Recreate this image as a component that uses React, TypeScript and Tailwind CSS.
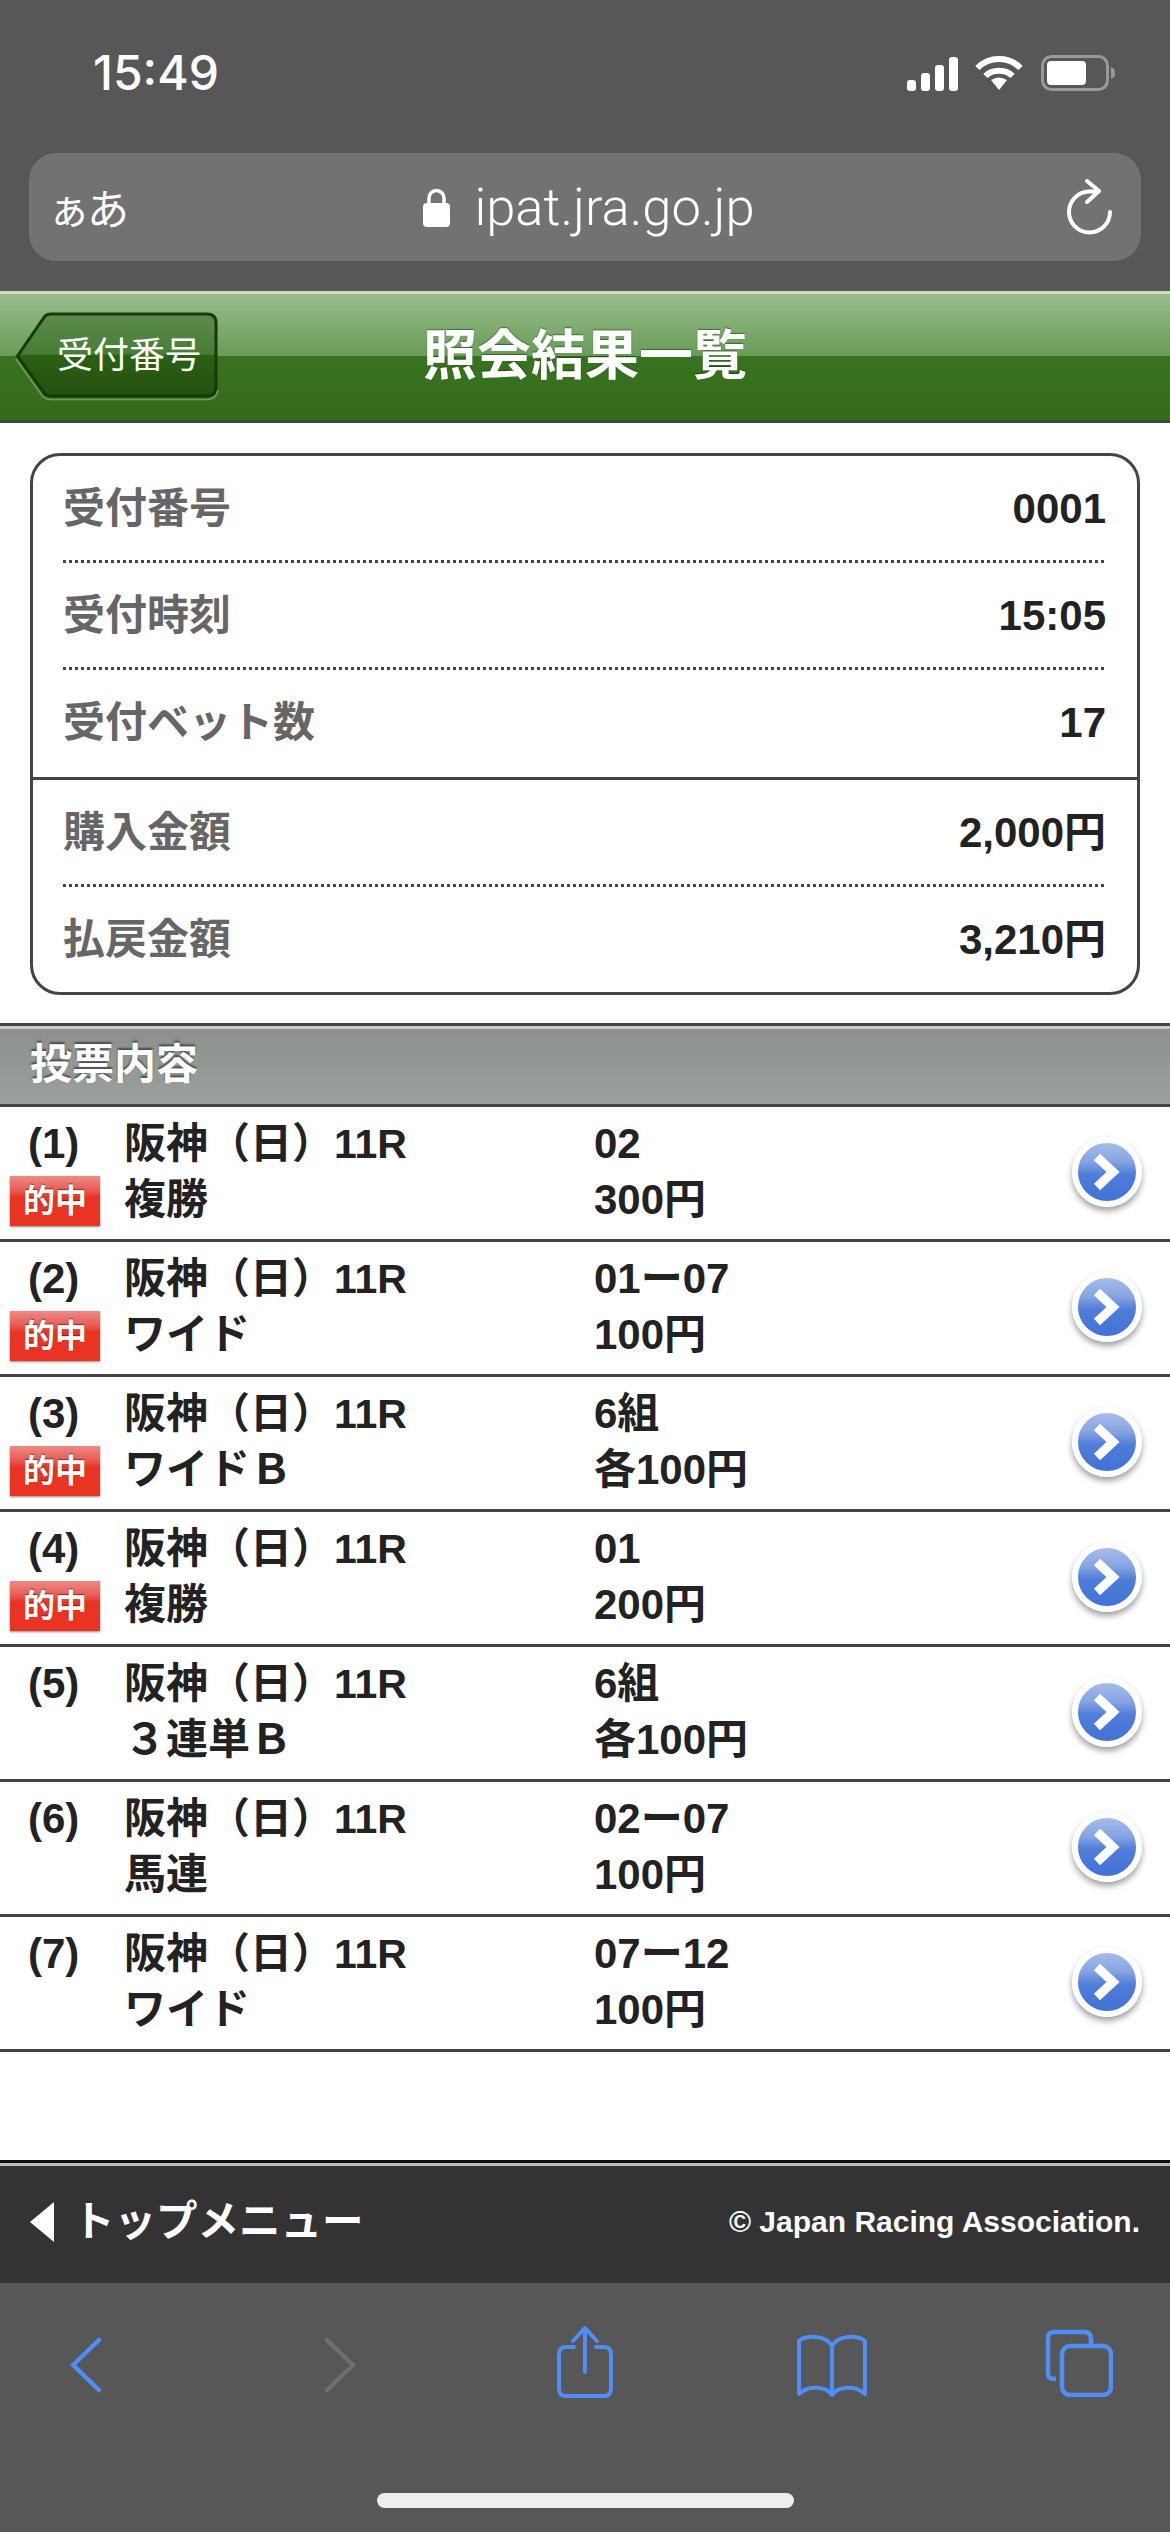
import React from "react";

const sans = "[font-family:'Liberation_Sans','Noto_Sans_CJK_JP',sans-serif]";

const rows = [
  { n: "(1)", hit: true, kind: "複勝", a: "02", b: "300円" },
  { n: "(2)", hit: true, kind: "ワイド", a: "01ー07", b: "100円" },
  { n: "(3)", hit: true, kind: "ワイドＢ", a: "6組", b: "各100円" },
  { n: "(4)", hit: true, kind: "複勝", a: "01", b: "200円" },
  { n: "(5)", hit: false, kind: "３連単Ｂ", a: "6組", b: "各100円" },
  { n: "(6)", hit: false, kind: "馬連", a: "02ー07", b: "100円" },
  { n: "(7)", hit: false, kind: "ワイド", a: "07ー12", b: "100円" },
];

function InfoRow({ label, value, dotted = true }: { label: string; value: string; dotted?: boolean }) {
  return (
    <>
      <div className="ml-[30px] mr-[31px] flex h-[104px] items-center justify-between">
        <span className="text-[42px] font-bold text-[#666666]">{label}</span>
        <span className="text-[42px] font-bold text-[#222222]">{value}</span>
      </div>
      {dotted && (
        <div className="ml-[30px] mr-[30px] h-[3px] bg-[repeating-linear-gradient(90deg,#444444_0,#444444_3px,transparent_3px,transparent_6px)]" />
      )}
    </>
  );
}

function Arrow() {
  return (
    <div className="mr-[28px] flex h-[70px] w-[70px] shrink-0 items-center justify-center rounded-full border-[6px] border-white bg-[linear-gradient(#a6bdea_0%,#86a4e2_32%,#4f7dd8_55%,#4272d5_100%)] shadow-[0_4px_6px_rgba(0,0,0,0.38)]">
      <svg width="32" height="40" viewBox="0 0 32 40">
        <path d="M6 5 L22 20 L6 35" fill="none" stroke="#ffffff" strokeWidth="9" />
      </svg>
    </div>
  );
}

function Row({ r }: { r: (typeof rows)[number] }) {
  return (
    <div className="flex h-[135px] items-center border-b-[3px] border-[#444444] pb-[3px] text-[42px] font-bold leading-[56px] text-[#222222]">
      <div className="w-[124px] shrink-0">
        <div className="pl-[28px]">{r.n}</div>
        <div className="h-[56px] pl-[10px] pt-[4px]">
          {r.hit && (
            <div className="flex h-[50px] w-[90px] items-center justify-center bg-[linear-gradient(#ee8a86_0%,#e85a52_30%,#e93323_42%,#e93323_100%)] text-[32px] leading-none text-white shadow-[0_1px_2px_rgba(0,0,0,0.45)] [text-shadow:0_-1px_1px_rgba(0,0,0,0.5)]">
              的中
            </div>
          )}
        </div>
      </div>
      <div className="w-[470px] shrink-0">
        <div className="whitespace-nowrap">
          阪神（日）<span className="text-[41px]">11R</span>
        </div>
        <div>{r.kind}</div>
      </div>
      <div className="flex-1">
        <div>{r.a}</div>
        <div>{r.b}</div>
      </div>
      <Arrow />
    </div>
  );
}

export default function App() {
  return (
    <div className={`flex h-[2532px] w-[1170px] flex-col overflow-hidden bg-white ${sans}`}>
      {/* browser top */}
      <div className="h-[291px] shrink-0 bg-[#575757] px-[29px]">
        <div className="flex h-[153px] items-start justify-between pl-[64px]">
          <span className="mt-[45px] font-['Inter',sans-serif] text-[48px] font-medium leading-[56px] text-white">15:49</span>
          <div className="mr-[26px] mt-[55px] flex items-start gap-[17px]">
            <svg width="51" height="34" viewBox="0 0 51 34" className="mt-[2px]" fill="#fff">
              <rect x="0" y="23" width="9" height="11" rx="3" />
              <rect x="14" y="16" width="9" height="18" rx="3" />
              <rect x="28" y="8" width="9" height="26" rx="3" />
              <rect x="42" y="0" width="9" height="34" rx="3" />
            </svg>
            <svg width="48" height="36" viewBox="0 0 48 36" fill="none" stroke="#fff" strokeWidth="6">
              <path d="M2.5 13 C14 1 34 1 45.5 13" />
              <path d="M10.5 21 C17 14 31 14 37.5 21" />
              <path d="M16 25 Q24 20 32 25 L24 35 Z" fill="#fff" stroke="none" />
            </svg>
            <svg width="74" height="36" viewBox="0 0 74 36" fill="none" className="ml-[1px]">
              <rect x="1.5" y="1.5" width="65" height="33" rx="9" stroke="#999999" strokeWidth="3" />
              <rect x="6" y="6" width="39" height="24" rx="4" fill="#fff" />
              <path d="M70 12 C73 13 74 15 74 18 C74 21 73 23 70 24 Z" fill="#999999" />
            </svg>
          </div>
        </div>
        <div className="flex h-[108px] items-center justify-between rounded-[27px] bg-[#727272] pl-[19px] pr-[28px] text-white">
          <span className="w-[63px] whitespace-nowrap font-['Noto_Sans_CJK_JP',sans-serif] text-[42px] leading-none tracking-[-3px]">ぁあ</span>
          <div className="flex items-center gap-[24px]">
            <svg width="27" height="39" viewBox="0 0 27 39" fill="#fff">
              <path d="M6 17 V10 a7.5 7.5 0 0 1 15 0 V17" fill="none" stroke="#fff" strokeWidth="3.5" />
              <rect x="0" y="15" width="27" height="24" rx="4" />
            </svg>
            <span className="font-['Roboto',sans-serif] text-[52.5px] font-light leading-none">ipat.jra.go.jp</span>
          </div>
          <svg width="46" height="56" viewBox="0 0 46 56" fill="none" stroke="#fff" strokeWidth="4" strokeLinecap="round" strokeLinejoin="round">
            <path d="M43 33 A20.5 20.5 0 1 1 22 12.5 L31 12.5" />
            <path d="M20 2 L32 12 L20 23" />
          </svg>
        </div>
      </div>

      {/* green header */}
      <div className="relative flex h-[132px] shrink-0 items-center justify-center border-t-[3px] border-b-[3px] border-t-[#c9dfc2] border-b-[#444444] bg-[linear-gradient(#9abd8c_0%,#679c57_49%,#38731f_49%,#346b1c_100%)]">
        <div className="absolute left-[15px] top-[18px] flex h-[90px] w-[204px] items-center justify-end pb-[3px] pr-[18px] text-[36px] leading-none text-white">
          <svg width="204" height="90" viewBox="0 0 204 90" className="absolute left-0 top-0">
            <defs>
              <linearGradient id="bk" x1="0" x2="0" y1="0" y2="1">
                <stop offset="0" stopColor="#5c8c4c" />
                <stop offset="0.49" stopColor="#477c36" />
                <stop offset="0.5" stopColor="#2b6114" />
                <stop offset="1" stopColor="#24500f" />
              </linearGradient>
            </defs>
            <path d="M2.5 44 L30 4 Q32 2 36 2 H192 Q201 2 201 11 V75 Q201 84 192 84 H36 Q32 84 30 82 Z" fill="url(#bk)" stroke="#163a08" strokeWidth="3" />
            <path d="M1 47 L28 85 Q31 87.5 36 87.5 H192 Q201 87.5 203 78" fill="none" stroke="#6f9d5f" strokeWidth="1.5" />
          </svg>
          <span className="relative">受付番号</span>
        </div>
        <span className="pb-[2px] text-[54px] font-bold leading-none text-white [text-shadow:0_-1px_1px_rgba(0,0,0,0.4)]">照会結果一覧</span>
      </div>

      {/* info card */}
      <div className="shrink-0 px-[30px] pt-[30px]">
        <div className="h-[542px] rounded-[30px] border-[3px] border-[#444444]">
          <InfoRow label="受付番号" value="0001" />
          <InfoRow label="受付時刻" value="15:05" />
          <InfoRow label="受付ベット数" value="17" dotted={false} />
          <div className="mt-[3px] h-[3px] bg-[#444444]" />
          <InfoRow label="購入金額" value="2,000円" />
          <InfoRow label="払戻金額" value="3,210円" dotted={false} />
        </div>
      </div>

      {/* section heading */}
      <div className="mt-[28px] flex h-[84px] shrink-0 items-center border-t-[3px] border-b-[3px] border-t-[#444444] border-b-[#444444] bg-[linear-gradient(#c8ccc8_0%,#c8ccc8_4%,#8c918e_4%,#9aa09c_100%)] pl-[30px] text-[42px] font-bold leading-none text-white [text-shadow:0_-2px_2px_rgba(0,0,0,0.5)]">
        投票内容
      </div>

      {/* list */}
      <div className="shrink-0">
        {rows.map((r) => (
          <Row key={r.n} r={r} />
        ))}
      </div>

      <div className="flex-1" />

      {/* footer */}
      <div className="flex h-[123px] shrink-0 items-center justify-between border-t-[3px] border-t-[#111111] bg-[linear-gradient(#bbbbbb_0%,#bbbbbb_3px,#333333_3px)] pb-[3px] pl-[30px] pr-[30px] font-bold leading-none text-white">
        <div className="flex items-center gap-[19px]">
          <svg width="24" height="40" viewBox="0 0 24 40"><path d="M24 0 V40 L0 20 Z" fill="#fff" /></svg>
          <span className="text-[41.5px]">トップメニュー</span>
        </div>
        <span className="text-[30px]">© Japan Racing Association.</span>
      </div>

      {/* browser bottom */}
      <div className="flex h-[249px] shrink-0 flex-col items-center bg-[#575757]">
        <div className="flex h-[210px] w-full items-start">
          <div className="ml-[50px] flex w-[72px] justify-center pt-[54px]">
            <svg width="32" height="56" viewBox="0 0 32 56" fill="none" stroke="#4f8df7" strokeWidth="4.5" strokeLinecap="round" strokeLinejoin="round">
              <path d="M29 3 L3 28 L29 53" />
            </svg>
          </div>
          <div className="ml-[182px] flex w-[72px] justify-center pt-[54px]">
            <svg width="32" height="56" viewBox="0 0 32 56" fill="none" stroke="#6e6e6e" strokeWidth="4.5" strokeLinecap="round" strokeLinejoin="round">
              <path d="M3 3 L29 28 L3 53" />
            </svg>
          </div>
          <div className="ml-[173px] flex w-[72px] justify-center pt-[42px]">
            <svg width="58" height="74" viewBox="0 0 58 74" fill="none" stroke="#4f8df7" strokeWidth="4" strokeLinecap="round" strokeLinejoin="round">
              <path d="M18 22 H10 Q3 22 3 29 V63 Q3 71 10 71 H48 Q55 71 55 63 V29 Q55 22 48 22 H40" />
              <path d="M29 47 V4" />
              <path d="M17 16 L29 3 L41 16" />
            </svg>
          </div>
          <div className="ml-[175px] flex w-[72px] justify-center pt-[50px]">
            <svg width="72" height="64" viewBox="0 0 72 64" fill="none" stroke="#4f8df7" strokeWidth="4" strokeLinejoin="round" strokeLinecap="round">
              <path d="M36 13 C31 3 12 1 3 8 V61 C12 52 30 53 36 62 C42 53 60 52 69 61 V8 C60 1 41 3 36 13 Z" />
              <path d="M36 13 V62" />
            </svg>
          </div>
          <div className="ml-[175px] flex w-[72px] justify-center pt-[46px]">
            <svg width="68" height="68" viewBox="0 0 68 68" fill="none" stroke="#4f8df7" strokeWidth="4.5" strokeLinejoin="round">
              <path d="M11 50 H9 Q3 50 3 44 V9 Q3 3 9 3 H39 Q46 3 46 10 V16" />
              <rect x="17" y="17" width="49" height="49" rx="8" />
            </svg>
          </div>
        </div>
        <div className="h-[15px] w-[417px] rounded-full bg-[#eeeeee]" />
      </div>
    </div>
  );
}
